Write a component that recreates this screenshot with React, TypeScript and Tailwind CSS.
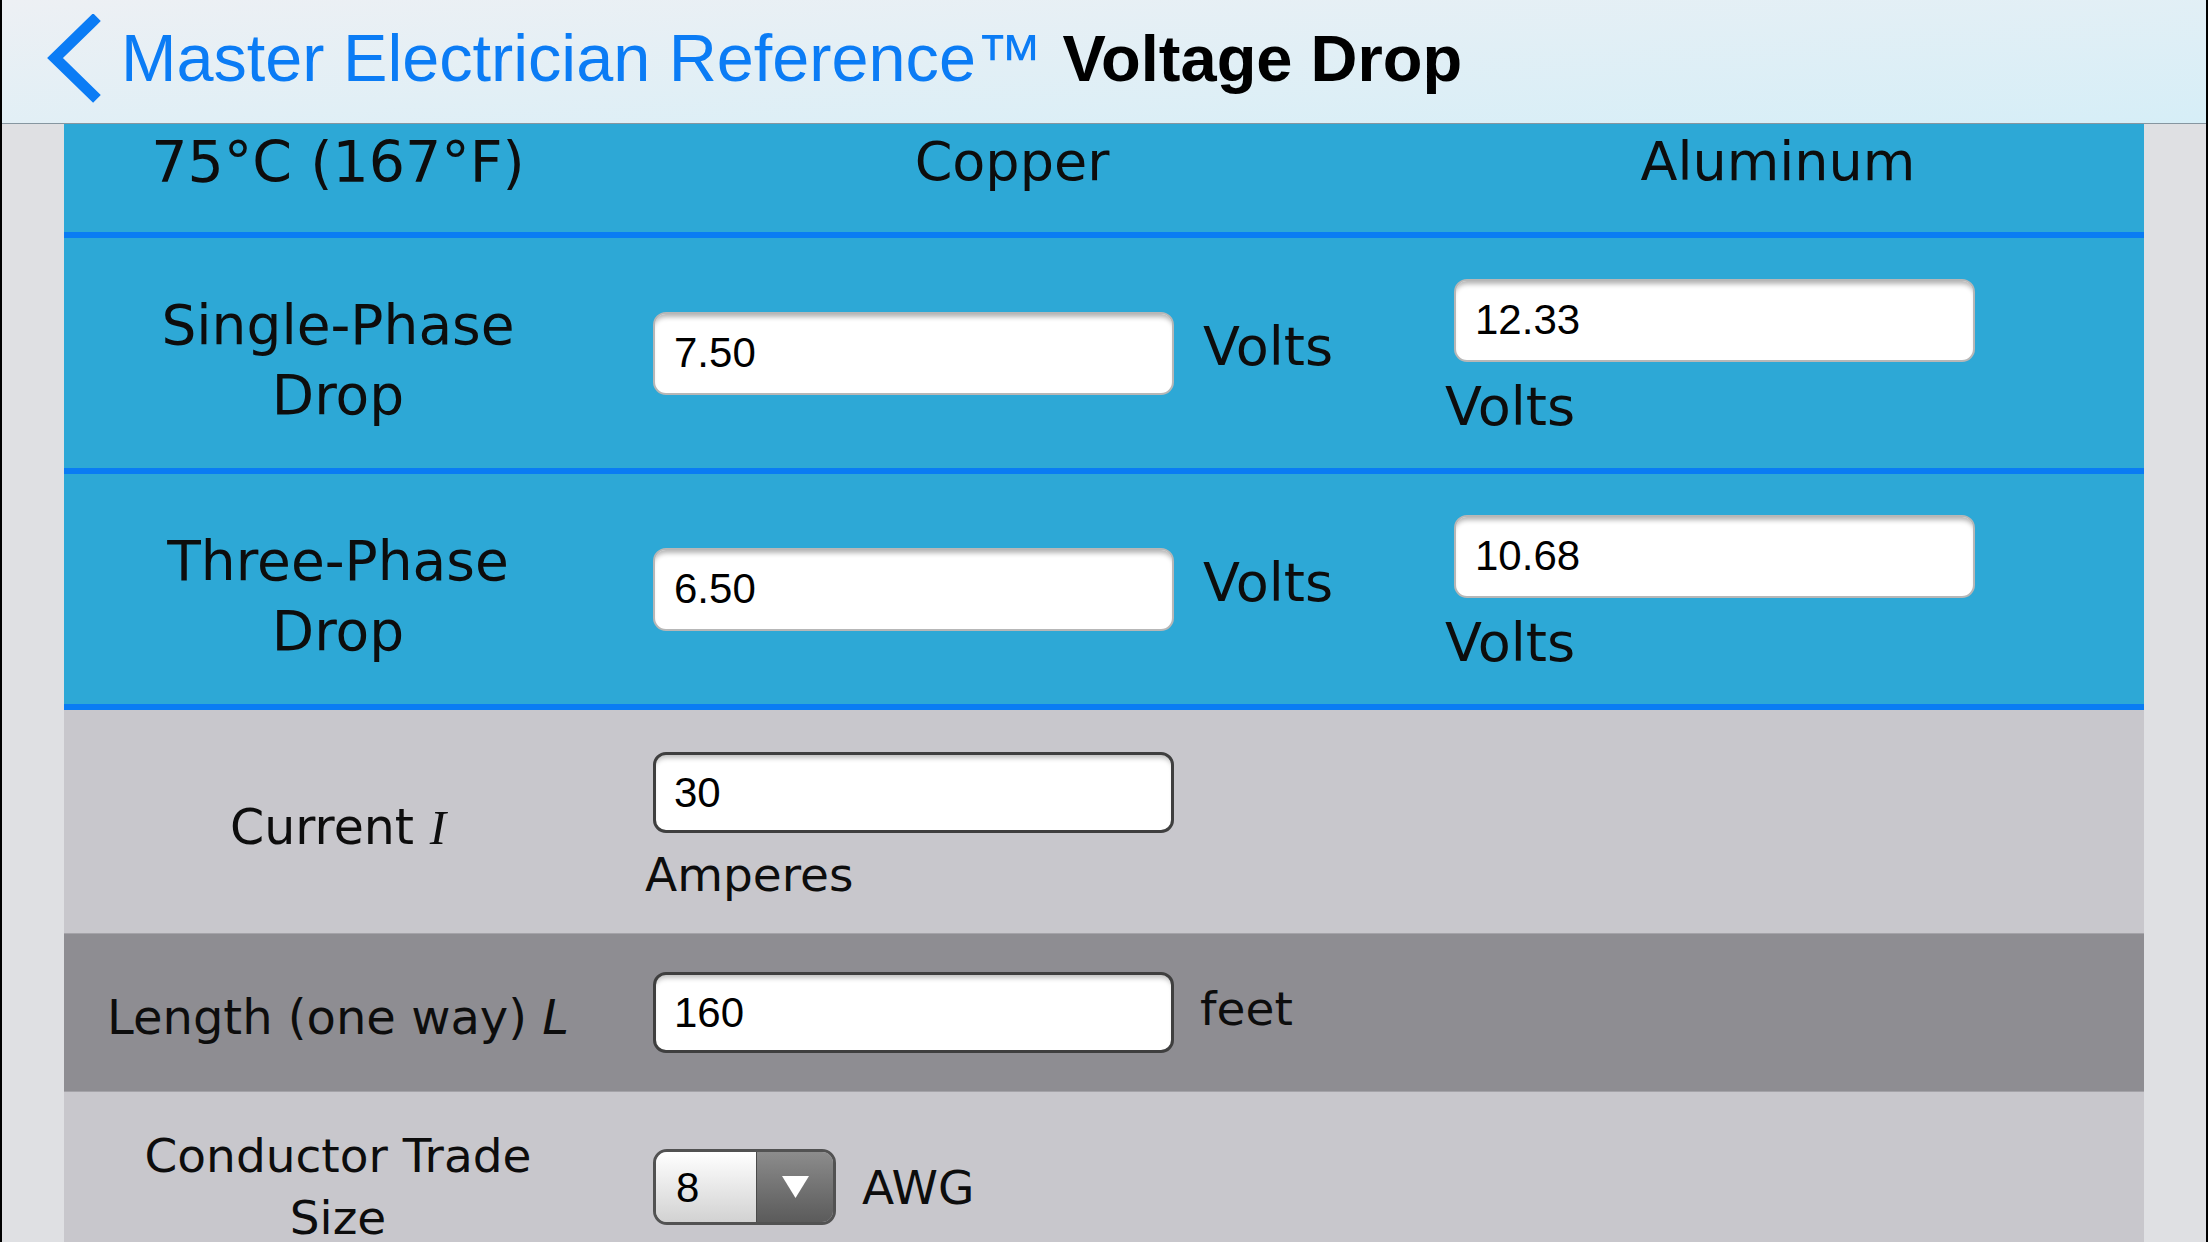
import React from "react";

const LABEL = "font-['DejaVu_Sans',Verdana,sans-serif]";
const FIELD = "font-['Liberation_Sans',Arial,sans-serif]";

const cyanInput = `${FIELD} h-[83px] w-[521px] rounded-[13px] border-2 border-[#b7b7b7] bg-white pl-[19px] text-[42px] text-black shadow-[inset_0_6px_5px_-3px_rgba(0,0,0,0.3)] outline-none`;
const grayInput = `${FIELD} h-[81px] w-[521px] rounded-[13px] border-[3px] border-[#3f3f3f] bg-white pl-[18px] text-[42px] text-black shadow-[inset_0_6px_5px_-3px_rgba(0,0,0,0.25)] outline-none`;

function DropRow({ label, copper, aluminum }: { label: string[]; copper: string; aluminum: string }) {
  return (
    <div className="grid h-[236px] grid-cols-[548px_800px_1fr] border-b-[6px] border-[#0a7cf3] bg-[#2da8d6]">
      <div className="flex flex-col items-center justify-center pt-[14px] text-center text-[55px] leading-[70px]">
        {label.map((l) => (
          <span key={l}>{l}</span>
        ))}
      </div>
      <div className="flex items-center pl-[41px]">
        <input readOnly value={copper} className={cyanInput} />
        <span className="mb-[12px] ml-[29px] text-[54px] leading-[70px]">Volts</span>
      </div>
      <div className="flex flex-col items-start justify-center pl-[33px] pt-[14px]">
        <input readOnly value={aluminum} className={`${cyanInput} ml-[9px]`} />
        <span className="mt-[10px] text-[54px] leading-[70px]">Volts</span>
      </div>
    </div>
  );
}

export default function App() {
  return (
    <div className={`${LABEL} flex h-[1242px] w-[2208px] flex-col overflow-hidden border-x-2 border-black text-[#0d0d0d]`}>
      {/* nav bar */}
      <header className="flex h-[124px] shrink-0 items-center border-b border-[#8696a0] bg-gradient-to-br from-[#edf0f4] to-[#d6eef7] pb-[6px]">
        <svg width="60" height="90" viewBox="0 0 60 90" className="ml-[41px] shrink-0">
          <path d="M50 7 L12 44 L50 81" fill="none" stroke="#0b7cf5" strokeWidth="11" strokeLinecap="square" />
        </svg>
        <span className={`${FIELD} ml-[18px] text-[66.6px] leading-none text-[#0b7cf5]`}>Master Electrician Reference™</span>
        <span className={`${FIELD} ml-[20px] text-[65px] font-bold leading-none text-black`}>Voltage Drop</span>
      </header>

      <main className="flex flex-1 flex-col bg-[#dfe0e3] px-[62px]">
        {/* column heads */}
        <div className="grid h-[114px] shrink-0 grid-cols-[548px_800px_1fr] border-b-[6px] border-[#0a7cf3] bg-[#2da8d6] pt-[3px] text-center text-[54px] leading-[70px]">
          <span className="text-[57px]">75°C (167°F)</span>
          <span>Copper</span>
          <span>Aluminum</span>
        </div>

        <DropRow label={["Single-Phase", "Drop"]} copper="7.50" aluminum="12.33" />
        <DropRow label={["Three-Phase", "Drop"]} copper="6.50" aluminum="10.68" />

        {/* current */}
        <div className="grid h-[223px] shrink-0 grid-cols-[548px_1fr] bg-[#c8c7cc] pt-[11px] text-[47px]">
          <div className="flex items-center justify-center leading-[55px] text-[49px]">
            Current&nbsp;<i className="font-['Liberation_Serif',serif]">I</i>
          </div>
          <div className="flex flex-col items-start justify-center pl-[33px]">
            <input readOnly value="30" className={`${grayInput} ml-[8px]`} />
            <span className="mt-[14px] leading-[55px]">Amperes</span>
          </div>
        </div>

        {/* length */}
        <div className="grid h-[159px] shrink-0 grid-cols-[548px_1fr] border-y border-[#a4a3a8] bg-[#8e8d92] text-[47px]">
          <div className="flex items-center justify-center pt-[10px] leading-[55px] text-[48px]">
            Length (one way)&nbsp;<i>L</i>
          </div>
          <div className="flex items-center pl-[41px]">
            <input readOnly value="160" className={grayInput} />
            <span className="mb-[8px] ml-[26px] leading-[55px]">feet</span>
          </div>
        </div>

        {/* conductor size */}
        <div className="grid h-[190px] shrink-0 grid-cols-[548px_1fr] bg-[#c8c7cc] text-[47px]">
          <div className="flex flex-col items-center justify-center text-center leading-[62px]">
            <span>Conductor Trade</span>
            <span>Size</span>
          </div>
          <div className="flex items-center pl-[41px]">
            <div className="flex h-[76px] w-[183px] overflow-hidden rounded-[14px] border-[3px] border-[#525252]">
              <div className={`${FIELD} flex w-[100px] items-center bg-gradient-to-b from-white to-[#d2d2d2] pl-[20px] text-[42px] text-black`}>
                8
              </div>
              <div className="flex flex-1 items-center justify-center border-l border-[#4a4a4a] bg-gradient-to-b from-[#8c8c8c] to-[#5b5b5b]">
                <svg width="27" height="22" viewBox="0 0 27 22">
                  <path d="M0 0 H27 L13.5 22 Z" fill="white" />
                </svg>
              </div>
            </div>
            <span className="ml-[26px] leading-[55px]">AWG</span>
          </div>
        </div>
      </main>
    </div>
  );
}
